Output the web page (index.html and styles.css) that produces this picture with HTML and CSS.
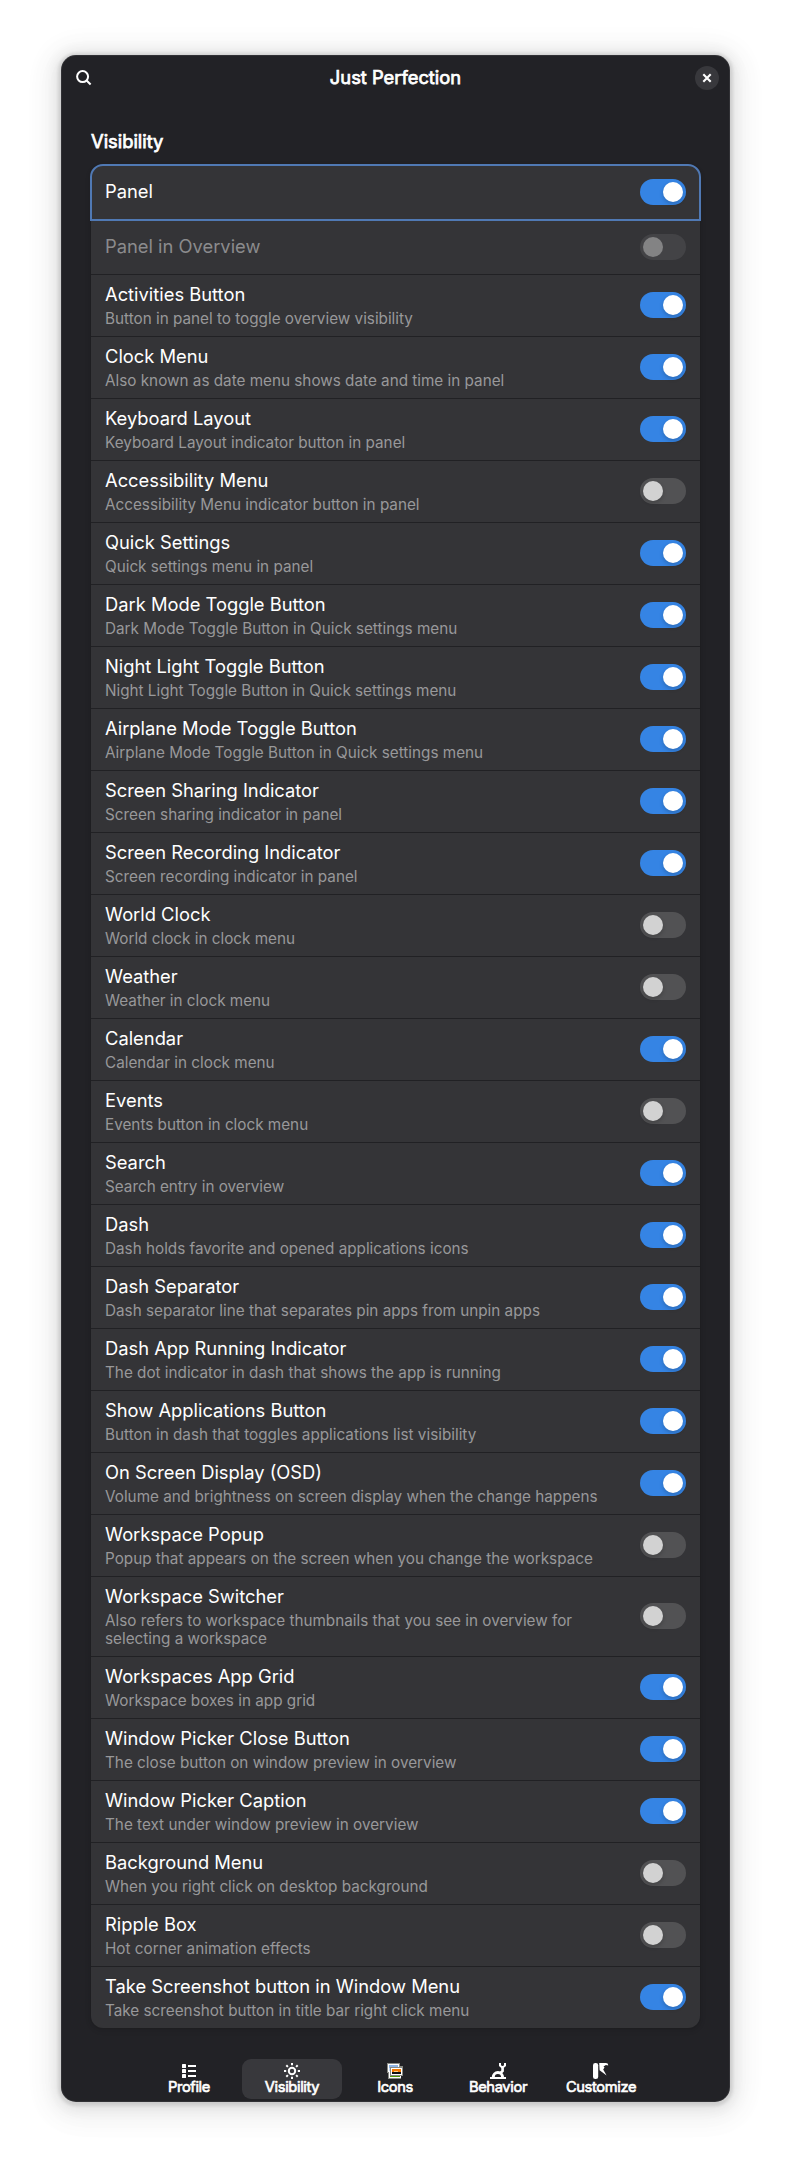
FILE: index.html
```html
<!DOCTYPE html>
<html lang="en">
<head>
<meta charset="utf-8">
<title>Just Perfection</title>
<link rel="stylesheet" href="styles.css">
</head>
<body>
<main class="window">
  <header class="titlebar">
    <svg class="search-icon" viewBox="0 0 16 16"><circle cx="6.6" cy="6.6" r="5.5" fill="none" stroke="#fff" stroke-width="2"/><path d="M10.6 10.6L14.6 14.4" stroke="#fff" stroke-width="2.1"/></svg>
    <h1 class="title">Just Perfection</h1>
    <button class="close" aria-label="Close"><svg width="10" height="10" viewBox="0 0 10 10"><path d="M1.3 1.3L8.7 8.7M8.7 1.3L1.3 8.7" stroke="#fff" stroke-width="2.1"/></svg></button>
  </header>
  <section class="content">
    <h2 class="heading">Visibility</h2>
    <ul class="list">
      <li class="row plain focused"><div class="text"><b>Panel</b></div><i class="switch on"></i></li>
      <li class="row plain disabled"><div class="text"><b>Panel in Overview</b></div><i class="switch"></i></li>
      <li class="row"><div class="text"><b>Activities Button</b><p>Button in panel to toggle overview visibility</p></div><i class="switch on"></i></li>
      <li class="row"><div class="text"><b>Clock Menu</b><p>Also known as date menu shows date and time in panel</p></div><i class="switch on"></i></li>
      <li class="row"><div class="text"><b>Keyboard Layout</b><p>Keyboard Layout indicator button in panel</p></div><i class="switch on"></i></li>
      <li class="row"><div class="text"><b>Accessibility Menu</b><p>Accessibility Menu indicator button in panel</p></div><i class="switch"></i></li>
      <li class="row"><div class="text"><b>Quick Settings</b><p>Quick settings menu in panel</p></div><i class="switch on"></i></li>
      <li class="row"><div class="text"><b>Dark Mode Toggle Button</b><p>Dark Mode Toggle Button in Quick settings menu</p></div><i class="switch on"></i></li>
      <li class="row"><div class="text"><b>Night Light Toggle Button</b><p>Night Light Toggle Button in Quick settings menu</p></div><i class="switch on"></i></li>
      <li class="row"><div class="text"><b>Airplane Mode Toggle Button</b><p>Airplane Mode Toggle Button in Quick settings menu</p></div><i class="switch on"></i></li>
      <li class="row"><div class="text"><b>Screen Sharing Indicator</b><p>Screen sharing indicator in panel</p></div><i class="switch on"></i></li>
      <li class="row"><div class="text"><b>Screen Recording Indicator</b><p>Screen recording indicator in panel</p></div><i class="switch on"></i></li>
      <li class="row"><div class="text"><b>World Clock</b><p>World clock in clock menu</p></div><i class="switch"></i></li>
      <li class="row"><div class="text"><b>Weather</b><p>Weather in clock menu</p></div><i class="switch"></i></li>
      <li class="row"><div class="text"><b>Calendar</b><p>Calendar in clock menu</p></div><i class="switch on"></i></li>
      <li class="row"><div class="text"><b>Events</b><p>Events button in clock menu</p></div><i class="switch"></i></li>
      <li class="row"><div class="text"><b>Search</b><p>Search entry in overview</p></div><i class="switch on"></i></li>
      <li class="row"><div class="text"><b>Dash</b><p>Dash holds favorite and opened applications icons</p></div><i class="switch on"></i></li>
      <li class="row"><div class="text"><b>Dash Separator</b><p>Dash separator line that separates pin apps from unpin apps</p></div><i class="switch on"></i></li>
      <li class="row"><div class="text"><b>Dash App Running Indicator</b><p>The dot indicator in dash that shows the app is running</p></div><i class="switch on"></i></li>
      <li class="row"><div class="text"><b>Show Applications Button</b><p>Button in dash that toggles applications list visibility</p></div><i class="switch on"></i></li>
      <li class="row"><div class="text"><b>On Screen Display (OSD)</b><p>Volume and brightness on screen display when the change happens</p></div><i class="switch on"></i></li>
      <li class="row"><div class="text"><b>Workspace Popup</b><p>Popup that appears on the screen when you change the workspace</p></div><i class="switch"></i></li>
      <li class="row"><div class="text"><b>Workspace Switcher</b><p>Also refers to workspace thumbnails that you see in overview for<br>selecting a workspace</p></div><i class="switch"></i></li>
      <li class="row"><div class="text"><b>Workspaces App Grid</b><p>Workspace boxes in app grid</p></div><i class="switch on"></i></li>
      <li class="row"><div class="text"><b>Window Picker Close Button</b><p>The close button on window preview in overview</p></div><i class="switch on"></i></li>
      <li class="row"><div class="text"><b>Window Picker Caption</b><p>The text under window preview in overview</p></div><i class="switch on"></i></li>
      <li class="row"><div class="text"><b>Background Menu</b><p>When you right click on desktop background</p></div><i class="switch"></i></li>
      <li class="row"><div class="text"><b>Ripple Box</b><p>Hot corner animation effects</p></div><i class="switch"></i></li>
      <li class="row"><div class="text"><b>Take Screenshot button in Window Menu</b><p>Take screenshot button in title bar right click menu</p></div><i class="switch on"></i></li>
    </ul>
  </section>
  <nav class="tabs">
    <a class="tab"><svg viewBox="0 0 16 16" fill="#fff"><rect x="1" y="1" width="4" height="4" rx=".6"/><rect x="1" y="6" width="4" height="4" rx=".6"/><rect x="1" y="11" width="4" height="4" rx=".6"/><path d="M7 2h8v2H7zM7 7h8v2H7zM7 12h8v2H7z"/></svg><span>Profile</span></a>
    <a class="tab active"><svg viewBox="0 0 16 16" stroke="#fff" stroke-width="2" fill="none"><circle cx="8" cy="8" r="3.2"/><path d="M8 0v2.2M8 13.8V16M0 8h2.2M13.8 8H16M2.3 2.3l1.6 1.6M12.1 12.1l1.6 1.6M13.7 2.3l-1.6 1.6M3.9 12.1l-1.6 1.6"/></svg><span>Visibility</span></a>
    <a class="tab"><svg viewBox="0 0 16 16"><path fill="#888a85" d="M0 0h13v3h3v10h-2v3H1V10H0z"/><path fill="#fff" d="M1 1h11v8H1zM2 9h12v6H2z"/><path fill="#8fb5e6" d="M2 2h9v6H2z"/><path fill="#c4d9f2" d="M2 5h5v3H2z"/><path fill="#4e9a06" d="M3 13h10v1H3z"/><path fill="#888a85" d="M3 4h13v9H3z"/><path fill="#fff" d="M4 5h11v7H4z"/><path fill="#f57900" d="M5 6h9v3H5z"/><path fill="#fcd089" d="M7 8h4v1H7z"/><path fill="#111" d="M5 9h9v2H5z"/></svg><span>Icons</span></a>
    <a class="tab"><svg viewBox="0 0 16 16" fill="none" stroke="#fff"><path fill="#fff" stroke="none" d="M0 14h16v2H0z"/><path stroke-width="3" d="M3.2 14.5a4.7 4.9 0 0 1 9.4 0"/><path stroke-width="2.6" d="M10 10.5L12.6 8V4.5"/><path stroke-width="2" d="M10 0v2.6l2.4 2L15 2.6V0"/></svg><span>Behavior</span></a>
    <a class="tab"><svg viewBox="0 0 16 16" fill="#fff"><rect x="0" y="0" width="5.2" height="16" rx="2.3"/><path d="M6.2 0h6.6c1.6 0 2.4.8 2.4 2.6L12.9 1.9 10.5 3.4l1 1.2L10.2 6.4l3.4 6L6.6 7.3z"/></svg><span>Customize</span></a>
  </nav>
</main>
</body>
</html>
```
FILE: styles.css
```css
* { box-sizing: border-box; margin: 0; padding: 0; }
body {
  background: #fff;
  font-family: Inter, sans-serif;
  color: #fff;
  padding: 55px 61px;
}
.window {
  width: 669px;
  height: 2047px;
  background: #222226;
  border-radius: 15px;
  display: flex;
  flex-direction: column;
  box-shadow: inset 0 0 0 1px rgba(255,255,255,.07),
    0 1px 3px 3px rgba(0,0,0,.09), 0 2px 14px 5px rgba(0,0,0,.07),
    0 4px 28px 12px rgba(0,0,0,.05), 0 6px 32px 16px rgba(0,0,0,.02);
}
.titlebar {
  height: 46px;
  flex: none;
  padding: 0 11px;
  display: grid;
  grid-template-columns: 24px 1fr 24px;
  align-items: center;
}
.search-icon { width: 16px; height: 16px; margin-left: 4px; }
.title {
  font-size: 18.33px;
  line-height: 22px;
  font-weight: 400;
  -webkit-text-stroke: .75px #fff;
  text-align: center;
  padding-bottom: 2px;
}
.close {
  width: 24px;
  height: 24px;
  border: 0;
  border-radius: 50%;
  background: #38383c;
  display: grid;
  place-items: center;
}
.content { flex: none; padding: 29px 30px 0; }
.heading {
  height: 35px;
  font-size: 18.33px;
  line-height: 22px;
  font-weight: 400;
  -webkit-text-stroke: .75px #fff;
}
.list {
  list-style: none;
  background: #343437;
  border-radius: 12px;
  box-shadow: 0 0 0 1px rgba(0,0,6,.03), 0 1px 3px 1px rgba(0,0,6,.07), 0 2px 6px 2px rgba(0,0,6,.03);
}
.row {
  min-height: 62px;
  padding: 8px 14px 0;
  display: flex;
  justify-content: space-between;
  border-bottom: 1px solid #212124;
}
.row:last-child { min-height: 61px; border-bottom: 0; }
.plain { height: 55px; min-height: 0; padding-top: 0; }
.text { align-self: flex-start; padding-bottom: 8px; }
.plain .text { align-self: center; padding: 0 0 2px; }
.text b {
  display: block;
  font-size: 18.33px;
  line-height: 22px;
  font-weight: 400;
}
.text p {
  margin-top: 5px;
  font-size: 15.28px;
  line-height: 18px;
  color: #98989a;
}
.focused {
  outline: 2px solid #5079b4;
  outline-offset: -1px;
  border-radius: 12px 12px 0 0;
  border-bottom-color: transparent;
}
.disabled b { color: #8b8b8d; }
.switch {
  width: 46px;
  height: 26px;
  flex: none;
  border-radius: 13px;
  padding: 3px;
  background: #525254;
  align-self: center;
  margin-top: -9px;
  display: flex;
}
.plain .switch { margin-top: 0; }
.switch::after {
  content: "";
  width: 20px;
  height: 20px;
  border-radius: 50%;
  background: #d2d2d2;
  box-shadow: 0 2px 4px rgba(0,0,6,.2);
}
.switch.on { background: #3584e4; justify-content: flex-end; }
.switch.on::after { background: #fff; }
.disabled .switch { background: #434346; }
.disabled .switch::after { background: #838384; box-shadow: none; }
.tabs {
  margin: 31px 0 0 78px;
  display: flex;
  gap: 3px;
}
.tab {
  width: 100px;
  height: 40px;
  padding-top: 4px;
  border-radius: 9px;
  display: flex;
  flex-direction: column;
  align-items: center;
  font-size: 14.67px;
  line-height: 16px;
  letter-spacing: -.35px;
  -webkit-text-stroke: .65px #fff;
}
.tab.active { background: #38383c; }
.tab svg { width: 16px; height: 16px; }
```
